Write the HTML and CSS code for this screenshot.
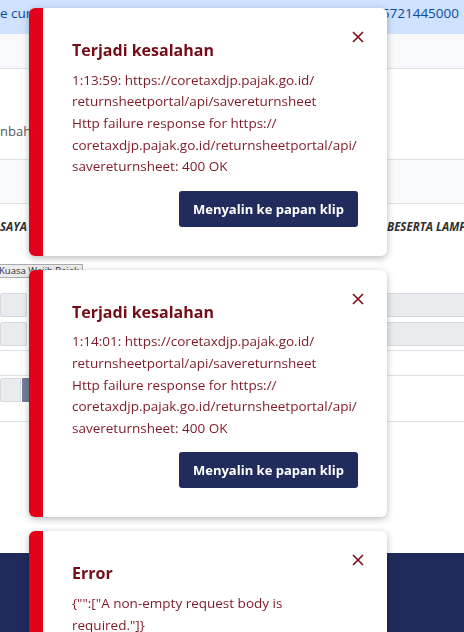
FILE: index.html
```html
<!DOCTYPE html>
<html lang="id">
<head>
<meta charset="utf-8">
<title>Pelaporan SPT</title>
<link rel="stylesheet" href="styles.css">
</head>
<body>
  <div class="page">
    <div class="notice">
      <span class="notice-text">e current</span>
      <span class="notice-id">5721445000</span>
    </div>
    <div class="subbar"></div>
    <div class="section">
      <span class="section-label">nbah (</span>
    </div>
    <div class="band"></div>
    <div class="statement">
      <span class="statement-left">SAYA MENYATAKAN</span>
      <span class="statement-right">BESERTA LAMPIRAN</span>
    </div>
    <div class="chip-row">
      <span class="chip">Kuasa Wajib Pajak</span>
    </div>
    <div class="form-rows">
      <div class="row">
        <span class="field field-narrow"></span>
        <span class="field field-wide"></span>
      </div>
      <div class="row row-last">
        <span class="field field-narrow"></span>
        <span class="field field-wide"></span>
      </div>
      <div class="row-empty"></div>
      <div class="row-action">
        <span class="field field-short"></span>
        <span class="field-btn"></span>
      </div>
    </div>
    <footer class="footer"></footer>
  </div>

  <div class="toasts">
    <div class="toast">
      <div class="toast-bar"></div>
      <div class="toast-body">
        <button class="toast-close" aria-label="Tutup">
          <svg viewBox="0 0 12 12" width="12" height="12"><path d="M1 1L11 11M11 1L1 11" stroke="currentColor" stroke-width="1.6" fill="none"/></svg>
        </button>
        <h2 class="toast-title">Terjadi kesalahan</h2>
        <p class="toast-msg">1:13:59: https://coretaxdjp.pajak.go.id/<br>returnsheetportal/api/savereturnsheet<br>Http failure response for https://<br>coretaxdjp.pajak.go.id/returnsheetportal/api/<br>savereturnsheet: 400 OK</p>
        <div class="toast-actions">
          <button class="copy-btn">Menyalin ke papan klip</button>
        </div>
      </div>
    </div>
    <div class="toast">
      <div class="toast-bar"></div>
      <div class="toast-body">
        <button class="toast-close" aria-label="Tutup">
          <svg viewBox="0 0 12 12" width="12" height="12"><path d="M1 1L11 11M11 1L1 11" stroke="currentColor" stroke-width="1.6" fill="none"/></svg>
        </button>
        <h2 class="toast-title">Terjadi kesalahan</h2>
        <p class="toast-msg">1:14:01: https://coretaxdjp.pajak.go.id/<br>returnsheetportal/api/savereturnsheet<br>Http failure response for https://<br>coretaxdjp.pajak.go.id/returnsheetportal/api/<br>savereturnsheet: 400 OK</p>
        <div class="toast-actions">
          <button class="copy-btn">Menyalin ke papan klip</button>
        </div>
      </div>
    </div>
    <div class="toast">
      <div class="toast-bar"></div>
      <div class="toast-body">
        <button class="toast-close" aria-label="Tutup">
          <svg viewBox="0 0 12 12" width="12" height="12"><path d="M1 1L11 11M11 1L1 11" stroke="currentColor" stroke-width="1.6" fill="none"/></svg>
        </button>
        <h2 class="toast-title">Error</h2>
        <p class="toast-msg">{"":["A non-empty request body is required."]}</p>
        <div class="toast-actions">
          <button class="copy-btn">Menyalin ke papan klip</button>
        </div>
      </div>
    </div>
  </div>
</body>
</html>
```

FILE: styles.css
```css
* {
  box-sizing: border-box;
}

body {
  margin: 0;
  background: #ffffff;
  font-family: "Open Sans", "Noto Sans", sans-serif;
  overflow: hidden;
}

.page {
  width: 464px;
  height: 632px;
  display: flex;
  flex-direction: column;
  overflow: hidden;
}

/* top info strip */
.notice {
  height: 34px;
  flex-shrink: 0;
  background: #cfe2ff;
  color: #0b4a9c;
  font-size: 13.5px;
  line-height: 18px;
  padding: 4px 5px 0 0;
  display: flex;
  justify-content: space-between;
  align-items: flex-start;
  white-space: nowrap;
}

.subbar {
  height: 35px;
  flex-shrink: 0;
  background: #f8f9fa;
  border-bottom: 1px solid #dee2e6;
}

.section {
  height: 91px;
  flex-shrink: 0;
  border-bottom: 1px solid #dee2e6;
  padding-top: 52px;
  font-size: 13px;
  line-height: 20px;
  color: #555a60;
  white-space: nowrap;
}

.band {
  height: 44px;
  flex-shrink: 0;
  background: #f8f9fa;
  border-bottom: 1px solid #dee2e6;
}

.statement {
  height: 60px;
  flex-shrink: 0;
  padding-top: 14px;
  display: flex;
  font-size: 11.5px;
  line-height: 18px;
  font-weight: 700;
  font-style: italic;
  color: #2e3033;
  white-space: nowrap;
  overflow: hidden;
}

.statement-left {
  width: 387px;
  flex-shrink: 0;
  overflow: hidden;
}

.chip-row {
  height: 29px;
  flex-shrink: 0;
  display: flex;
  align-items: flex-start;
}

.chip {
  display: inline-block;
  height: 14px;
  padding: 0 3px 0 0;
  margin-left: -2px;
  background: #ececec;
  border: 1px solid #a9abae;
  font-size: 9.5px;
  line-height: 12px;
  color: #333;
  white-space: nowrap;
}

/* disabled form grid below the statement */
.form-rows {
  flex-shrink: 0;
}

.row {
  display: flex;
  gap: 4px;
  margin-bottom: 5px;
}

.row-last {
  margin-bottom: 0;
  padding-bottom: 4px;
  border-bottom: 1px solid #dee2e6;
}

.field {
  display: block;
  height: 24px;
  background: #e9ecef;
  border: 1px solid #d6dade;
  border-radius: 2px;
}

.field-narrow {
  width: 27px;
  flex-shrink: 0;
}

.field-wide {
  flex: 1;
  border-radius: 0;
  border-right: 0;
}

.row-empty {
  height: 25px;
  border-bottom: 1px solid #dee2e6;
}

.row-action {
  display: flex;
  gap: 1px;
  padding: 2px 0 19px;
  border-bottom: 1px solid #dee2e6;
}

.field-short {
  width: 21px;
  flex-shrink: 0;
  border-radius: 2px 0 0 2px;
}

.field-btn {
  width: 30px;
  height: 24px;
  background: #747c99;
  border-radius: 0 2px 2px 0;
}

.footer {
  margin-top: auto;
  height: 79px;
  flex-shrink: 0;
  background: #212b5b;
}

/* toast stack */
.toasts {
  position: fixed;
  top: 8px;
  left: 29px;
  width: 358px;
  display: flex;
  flex-direction: column;
  gap: 14px;
}

.toast {
  display: flex;
  background: #ffffff;
  border-radius: 6px;
  overflow: hidden;
  box-shadow: 0 2px 7px rgba(0, 0, 0, 0.28);
}

.toast-bar {
  width: 14px;
  flex-shrink: 0;
  background: #e3001b;
}

.toast-body {
  position: relative;
  flex: 1;
  padding: 32px 29px 29px 29px;
}

.toast-close {
  position: absolute;
  top: 23px;
  right: 23px;
  width: 12px;
  height: 12px;
  padding: 0;
  border: 0;
  background: none;
  color: #7a0d1a;
  display: flex;
}

.toast-title {
  margin: 0 0 8px;
  font-size: 16px;
  line-height: 21.6px;
  font-weight: 700;
  color: #740c17;
}

.toast-msg {
  margin: 0;
  font-size: 13.5px;
  line-height: 21.7px;
  color: #7d1a27;
}

.toast-actions {
  display: flex;
  justify-content: flex-end;
  margin-top: 12.5px;
}

.copy-btn {
  width: 179px;
  height: 36px;
  border: 0;
  border-radius: 3px;
  background: #212b5c;
  color: #ffffff;
  font-family: "Open Sans", "Noto Sans", sans-serif;
  font-size: 13px;
  font-weight: 700;
}
```
